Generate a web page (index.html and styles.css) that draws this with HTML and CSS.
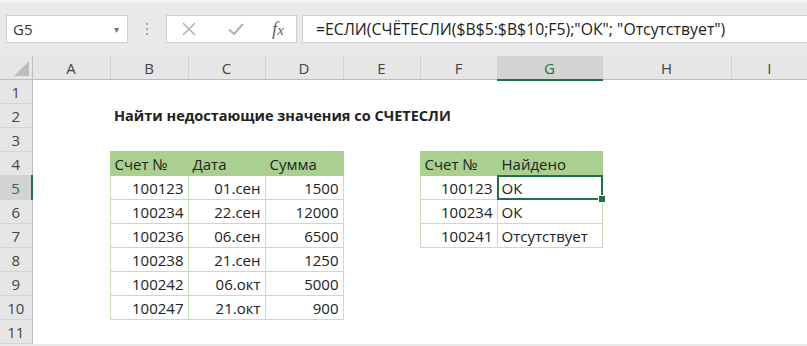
FILE: index.html
```html
<!DOCTYPE html>
<html lang="ru">
<head>
    <meta charset="UTF-8">
    <title>СЧЕТЕСЛИ</title>
    <link rel="stylesheet" href="styles.css">
</head>
<body>
    <div class="ribbon-edge"></div>
    <div class="formula-bar">
        <div class="name-box">
            <span>G5</span>
            <span class="caret">&#9662;</span>
        </div>
        <div class="grip">
            <span></span><span></span><span></span>
        </div>
        <div class="fx-buttons">
            <svg class="btn-icon" width="16" height="16" viewBox="0 0 16 16">
                <path d="M2 2 L14 14 M14 2 L2 14" stroke="#b4b4b4" stroke-width="1.6" fill="none"/>
            </svg>
            <svg class="btn-icon" width="18" height="16" viewBox="0 0 18 16">
                <path d="M2 8.5 L7 13 L16 3" stroke="#b4b4b4" stroke-width="2.2" fill="none"/>
            </svg>
            <span class="fx">f<i>x</i></span>
        </div>
        <div class="formula-input">=ЕСЛИ(СЧЁТЕСЛИ($B$5:$B$10;F5);"ОК"; "Отсутствует")</div>
    </div>

    <table class="sheet">
        <colgroup>
            <col style="width:32px">
            <col style="width:78px">
            <col style="width:78px">
            <col style="width:77px">
            <col style="width:78px">
            <col style="width:77px">
            <col style="width:77px">
            <col style="width:105px">
            <col style="width:129px">
            <col style="width:76px">
        </colgroup>
        <thead>
            <tr class="col-heads">
                <th class="corner">
                    <svg width="32" height="23" viewBox="0 0 32 23">
                        <polygon points="29,5 29,20 14,20" fill="#bcbcbc"/>
                    </svg>
                </th>
                <th>A</th><th>B</th><th>C</th><th>D</th><th>E</th><th>F</th>
                <th class="active">G</th><th>H</th><th>I</th>
            </tr>
        </thead>
        <tbody>
            <tr>
                <th class="row-head">1</th>
                <td></td><td></td><td></td><td></td><td></td><td></td><td></td><td></td><td></td>
            </tr>
            <tr>
                <th class="row-head">2</th>
                <td></td><td class="title">Найти недостающие значения со СЧЕТЕСЛИ</td>
                <td></td><td></td><td></td><td></td><td></td><td></td><td></td>
            </tr>
            <tr>
                <th class="row-head">3</th>
                <td></td><td></td><td></td><td></td><td></td><td></td><td></td><td></td><td></td>
            </tr>
            <tr>
                <th class="row-head">4</th>
                <td></td>
                <td class="hdr">Счет №</td><td class="hdr">Дата</td><td class="hdr">Сумма</td>
                <td></td>
                <td class="hdr">Счет №</td><td class="hdr">Найдено</td>
                <td></td><td></td>
            </tr>
            <tr>
                <th class="row-head active">5</th>
                <td></td>
                <td class="cell num">100123</td><td class="cell num">01.сен</td><td class="cell num">1500</td>
                <td></td>
                <td class="cell num">100123</td><td class="cell selected">ОК</td>
                <td></td><td></td>
            </tr>
            <tr>
                <th class="row-head">6</th>
                <td></td>
                <td class="cell num">100234</td><td class="cell num">22.сен</td><td class="cell num">12000</td>
                <td></td>
                <td class="cell num">100234</td><td class="cell">ОК</td>
                <td></td><td></td>
            </tr>
            <tr>
                <th class="row-head">7</th>
                <td></td>
                <td class="cell num">100236</td><td class="cell num">06.сен</td><td class="cell num">6500</td>
                <td></td>
                <td class="cell num">100241</td><td class="cell">Отсутствует</td>
                <td></td><td></td>
            </tr>
            <tr>
                <th class="row-head">8</th>
                <td></td>
                <td class="cell num">100238</td><td class="cell num">21.сен</td><td class="cell num">1250</td>
                <td></td><td></td><td></td><td></td><td></td>
            </tr>
            <tr>
                <th class="row-head">9</th>
                <td></td>
                <td class="cell num">100242</td><td class="cell num">06.окт</td><td class="cell num">5000</td>
                <td></td><td></td><td></td><td></td><td></td>
            </tr>
            <tr>
                <th class="row-head">10</th>
                <td></td>
                <td class="cell num">100247</td><td class="cell num">21.окт</td><td class="cell num">900</td>
                <td></td><td></td><td></td><td></td><td></td>
            </tr>
            <tr>
                <th class="row-head">11</th>
                <td></td><td></td><td></td><td></td><td></td><td></td><td></td><td></td><td></td>
            </tr>
        </tbody>
    </table>
</body>
</html>
```

FILE: styles.css
```css
body, html {
    margin: 0;
    padding: 0;
    overflow: hidden;
    background: #e9e9e9;
    font-family: 'Open Sans', 'Noto Sans', sans-serif;
    color: #222;
}

.ribbon-edge {
    height: 3px;
    background: #f3f3f3;
}

/* formula bar */
.formula-bar {
    display: flex;
    align-items: stretch;
    height: 28px;
    padding: 12px 0 13px 6px;
}

.name-box {
    width: 122px;
    box-sizing: border-box;
    background: #fff;
    border: 1px solid #cfcfcf;
    display: flex;
    align-items: center;
    justify-content: space-between;
    padding: 0 8px 0 6px;
    font-size: 15px;
    color: #333;
}

.name-box .caret {
    font-size: 10px;
    color: #777;
}

.grip {
    width: 38px;
    display: flex;
    flex-direction: column;
    align-items: center;
    justify-content: center;
    gap: 3px;
}

.grip span {
    width: 2px;
    height: 2px;
    background: #a8a8a8;
}

.fx-buttons {
    width: 131px;
    box-sizing: border-box;
    background: #fff;
    border: 1px solid #cfcfcf;
    display: flex;
    align-items: center;
    padding: 0 0 0 14px;
}

.btn-icon {
    margin-right: 30px;
}

.fx {
    font-family: 'Liberation Serif', 'DejaVu Serif', serif;
    font-style: italic;
    font-size: 19px;
    color: #666;
    margin-left: -3px;
}

.fx i {
    font-size: 15px;
}

.formula-input {
    flex: 1;
    margin-left: 5px;
    background: #fff;
    border: 1px solid #cfcfcf;
    border-right: none;
    display: flex;
    align-items: center;
    padding-left: 13px;
    font-size: 15.8px;
    color: #222;
    white-space: nowrap;
}

/* grid */
.sheet {
    border-collapse: collapse;
    table-layout: fixed;
    width: 807px;
    background: #fff;
    font-size: 15px;
}

.sheet td, .sheet th {
    padding: 0 4px;
    white-space: nowrap;
    overflow: visible;
}

.col-heads {
    height: 23px;
}

.col-heads th {
    background: #e6e6e6;
    font-weight: normal;
    color: #444;
    border-left: 1px solid #d0d0d0;
    border-bottom: 1px solid #bdbdbd;
    padding-top: 1px;
}

.col-heads th.corner {
    padding: 0;
    border-left: none;
    border-right: 1px solid #bdbdbd;
    vertical-align: bottom;
    line-height: 0;
}

.col-heads th.active {
    background: #d3d3d3;
    color: #217346;
    border-bottom: 2px solid #217346;
}

tbody tr {
    height: 24px;
}

.row-head {
    background: #e6e6e6;
    font-weight: normal;
    color: #444;
    text-align: center;
    border-bottom: 1px solid #d4d4d4;
    border-right: 1px solid #bdbdbd;
    padding: 1px 0 0;
}

.row-head.active {
    background: #d3d3d3;
    color: #217346;
    border-right: 2px solid #217346;
}

.title {
    font-weight: bold;
    font-size: 14.5px;
}

.hdr {
    background: #a9d08e;
    border: 1px solid #a9d08e;
}

.cell {
    border: 1px solid #c6e0b4;
}

.num {
    text-align: right;
}

.selected {
    position: relative;
}

.selected::after {
    content: "";
    position: absolute;
    left: -1px;
    top: -1px;
    right: -1px;
    bottom: -1px;
    border: 2px solid #217346;
}

.selected::before {
    content: "";
    position: absolute;
    right: -4px;
    bottom: -4px;
    width: 6px;
    height: 6px;
    background: #217346;
    border: 1px solid #fff;
    z-index: 1;
}
```
